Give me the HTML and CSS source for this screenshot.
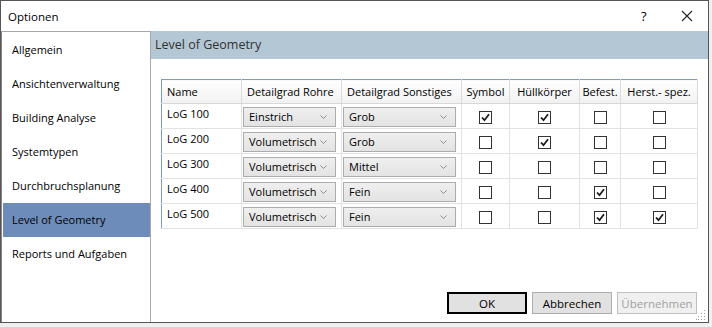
FILE: index.html
```html
<!DOCTYPE html>
<html lang="de">
<head>
<meta charset="UTF-8">
<title>Optionen</title>
<link rel="stylesheet" href="styles.css">
</head>
<body>
    <div class="window">
        <div class="titlebar">
            <span class="title">Optionen</span>
            <span class="help">?</span>
            <span class="close">
                <svg width="12" height="12" viewBox="0 0 12 12"><path d="M1 1 L11 11 M11 1 L1 11" stroke="#222" stroke-width="1.1" fill="none"/></svg>
            </span>
        </div>
        <div class="main">
            <div class="sidebar">
                <div class="navItem">Allgemein</div>
                <div class="navItem">Ansichtenverwaltung</div>
                <div class="navItem">Building Analyse</div>
                <div class="navItem">Systemtypen</div>
                <div class="navItem">Durchbruchsplanung</div>
                <div class="navItem selected">Level of Geometry</div>
                <div class="navItem">Reports und Aufgaben</div>
            </div>
            <div class="content">
                <div class="band">Level of Geometry</div>
                <div class="gridWrap">
                    <table class="grid">
                        <colgroup>
                            <col style="width: 80px">
                            <col style="width: 100px">
                            <col style="width: 120px">
                            <col style="width: 48px">
                            <col style="width: 70px">
                            <col style="width: 41px">
                            <col style="width: 77px">
                        </colgroup>
                        <thead>
                            <tr>
                                <th>Name</th>
                                <th>Detailgrad Rohre</th>
                                <th>Detailgrad Sonstiges</th>
                                <th class="center">Symbol</th>
                                <th class="center">Hüllkörper</th>
                                <th class="center">Befest.</th>
                                <th class="center">Herst.- spez.</th>
                            </tr>
                        </thead>
                        <tbody id="rows"></tbody>
                    </table>
                </div>
                <div class="buttons">
                    <button class="btn default">OK</button>
                    <button class="btn">Abbrechen</button>
                    <button class="btn" disabled>Übernehmen</button>
                </div>
                <svg class="grip" width="10" height="10" viewBox="0 0 10 10">
                    <rect x="8" y="0" width="1" height="1" fill="#a0a0a0"/>
                    <rect x="5" y="3" width="1" height="1" fill="#a0a0a0"/>
                    <rect x="8" y="3" width="1" height="1" fill="#a0a0a0"/>
                    <rect x="2" y="6" width="1" height="1" fill="#a0a0a0"/>
                    <rect x="5" y="6" width="1" height="1" fill="#a0a0a0"/>
                    <rect x="8" y="6" width="1" height="1" fill="#a0a0a0"/>
                    <rect x="0" y="9" width="1" height="1" fill="#a0a0a0"/>
                    <rect x="2" y="9" width="1" height="1" fill="#a0a0a0"/>
                    <rect x="5" y="9" width="1" height="1" fill="#a0a0a0"/>
                    <rect x="8" y="9" width="1" height="1" fill="#a0a0a0"/>
                </svg>
            </div>
        </div>
    </div>
    <script>
        var data = [
            ['LoG 100', 'Einstrich', 'Grob', 1, 1, 0, 0],
            ['LoG 200', 'Volumetrisch', 'Grob', 0, 1, 0, 0],
            ['LoG 300', 'Volumetrisch', 'Mittel', 0, 0, 0, 0],
            ['LoG 400', 'Volumetrisch', 'Fein', 0, 0, 1, 0],
            ['LoG 500', 'Volumetrisch', 'Fein', 0, 0, 1, 1]
        ];
        var chevron = '<svg class="chev" width="7" height="4" viewBox="0 0 7 4"><path d="M0.5 0.5 L3.5 3.5 L6.5 0.5" stroke="#8a8a8a" fill="none"/></svg>';
        var check = '<svg width="9" height="9" viewBox="0 0 9 9"><path d="M1 4.5 L3.5 7.2 L8 1.2" stroke="#1a1a1a" stroke-width="1.8" fill="none"/></svg>';

        function combo(text) {
            return '<div class="combo"><span>' + text + '</span>' + chevron + '</div>';
        }

        var html = '';
        data.forEach(function(row) {
            html += '<tr><td class="name">' + row[0] + '</td>';
            html += '<td>' + combo(row[1]) + '</td>';
            html += '<td>' + combo(row[2]) + '</td>';
            for (var i = 3; i < 7; i++) {
                html += '<td class="center"><span class="box">' + (row[i] ? check : '') + '</span></td>';
            }
            html += '</tr>';
        });
        document.getElementById('rows').innerHTML = html;
    </script>
</body>
</html>
```

FILE: styles.css
```css
body {
    margin: 0;
    background-color: #f0f0f0;
    font-family: "Open Sans", "Noto Sans", sans-serif;
    font-size: 11px;
    color: #000;
}
.window {
    width: 707px;
    height: 321px;
    border: 1px solid #555;
    background-color: #fff;
    display: flex;
    flex-direction: column;
}
.titlebar {
    height: 30px;
    display: flex;
    align-items: center;
    flex-shrink: 0;
}
.title {
    flex: 1;
    padding-left: 7px;
    font-size: 11.5px;
}
.help {
    font-size: 13px;
    width: 40px;
}
.close {
    width: 27px;
    padding-top: 3px;
}
.main {
    flex: 1;
    display: flex;
    min-height: 0;
}
.sidebar {
    width: 147px;
    border-top: 1px solid #a8a8a8;
    border-right: 1px solid #a8a8a8;
    border-left: 1px solid #888;
    padding: 1px 0 0 1px;
}
.navItem {
    height: 34px;
    line-height: 34px;
    padding-left: 9px;
    white-space: nowrap;
}
.navItem.selected {
    background-color: #6e8cb9;
}
.content {
    flex: 1;
    display: flex;
    flex-direction: column;
    position: relative;
}
.band {
    height: 28px;
    line-height: 27px;
    background-color: #b4c7d5;
    color: #333;
    font-size: 12.5px;
    padding-left: 4px;
}
.gridWrap {
    padding: 20px 10px 0 10px;
}
.grid {
    border-collapse: collapse;
    table-layout: fixed;
    width: 537px;
    border: 1px solid #7f9db9;
}
.grid th {
    height: 23px;
    font-weight: normal;
    text-align: left;
    padding: 0 0 0 5px;
    white-space: nowrap;
    overflow: hidden;
    background: linear-gradient(#ffffff, #f1f1f1);
    border-right: 1px solid #dcdcdc;
    border-bottom: 1px solid #d8d8d8;
}
.grid th.center {
    text-align: center;
    padding: 0;
}
.grid td {
    height: 24px;
    padding: 0;
    vertical-align: middle;
    border-right: 1px solid #e2e2e2;
    border-bottom: 1px solid #e2e2e2;
}
.grid td.name {
    padding-left: 5px;
    line-height: 20px;
    vertical-align: top;
}
.grid td.center {
    text-align: center;
}
.combo {
    height: 18px;
    margin: 1px 5px 0 1px;
    border: 1px solid #acacac;
    background: linear-gradient(#efefef, #e3e3e3);
    display: flex;
    align-items: center;
    justify-content: space-between;
    padding: 0 8px 0 5px;
}
.chev {
    flex-shrink: 0;
}
.box {
    display: inline-flex;
    align-items: center;
    justify-content: center;
    width: 11px;
    height: 11px;
    border: 1px solid #333;
    background-color: #fff;
    vertical-align: middle;
}
.buttons {
    margin-top: auto;
    display: flex;
    justify-content: flex-end;
    gap: 5px;
    padding: 0 11px 8px 0;
}
.btn {
    width: 80px;
    height: 22px;
    font-family: inherit;
    font-size: 11.5px;
    background-color: #e1e1e1;
    border: 1px solid #adadad;
    padding: 0;
    color: #000;
}
.btn.default {
    border: 2px solid #000;
}
.btn:disabled {
    background-color: #f0f0f0;
    border-color: #bfbfbf;
    color: #a0a0a0;
}
.grip {
    position: absolute;
    right: 2px;
    bottom: 2px;
}
```
